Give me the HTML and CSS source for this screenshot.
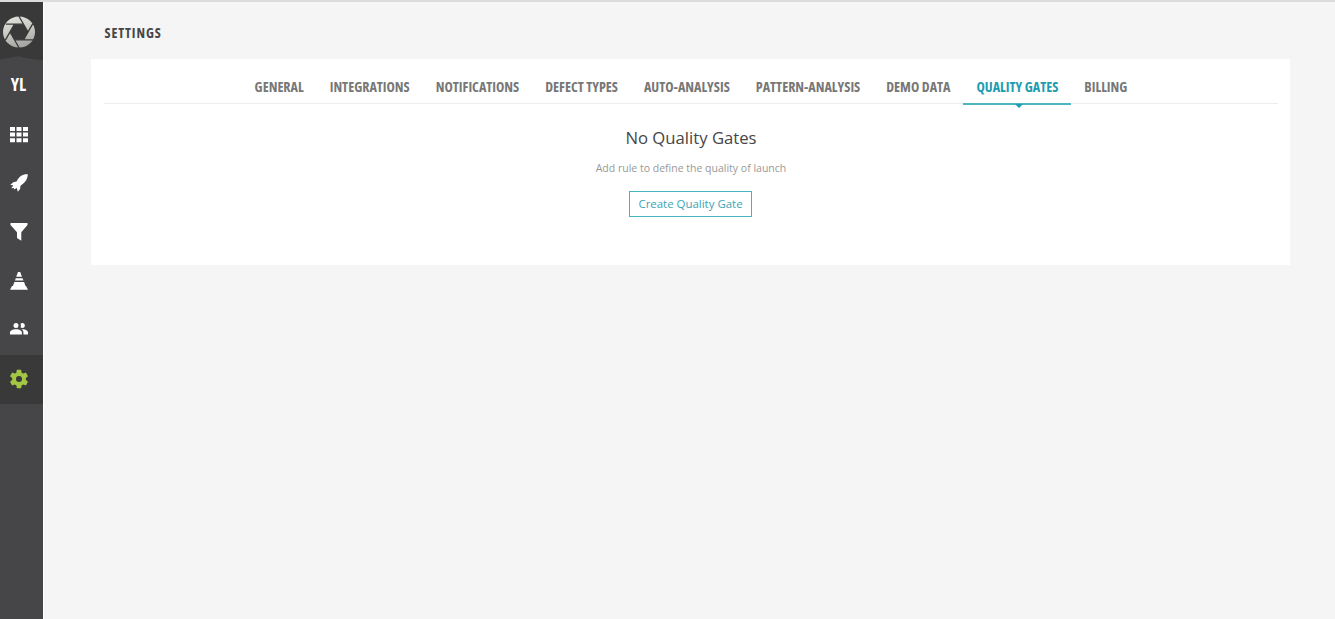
FILE: index.html
```html
<!DOCTYPE html>
<html lang="en">
<head>
<meta charset="utf-8">
<title>Settings</title>
<link rel="stylesheet" href="styles.css">
</head>
<body>
<div class="app">
  <aside class="sidebar">
    <div class="logo">
      <svg width="34" height="34" viewBox="0 0 34 34">
        <defs><linearGradient id="metal" x1="0" y1="0" x2="0.3" y2="1"><stop offset="0" stop-color="#e4e4e0"/><stop offset=".5" stop-color="#ccccc7"/><stop offset="1" stop-color="#a8a8a6"/></linearGradient></defs>
        <path fill="url(#metal)" fill-rule="evenodd" d="M17 1.4a16 15.6 0 1 0 0 31.2a16 15.6 0 1 0 0-31.2zM26 17L21.5 9.2H12.5L8 17L12.5 24.8H21.5z"/>
        <path fill="none" stroke="#393939" stroke-width="1.3" d="M21.5 9.2H4M26 17L16.8 1M21.5 24.8L30.8 8.7M12.5 24.8H31M8 17L17.2 33M12.5 9.2L3.2 25.3"/>
      </svg>
      <svg class="arch" width="43" height="5" viewBox="0 0 43 5"><path fill="#464547" d="M0 3.3Q10 2.5 18.5 0Q28 3 43 4V5H0z"/></svg>
    </div>
    <div class="item project">YL</div>
    <div class="item"><svg width="18" height="16" viewBox="0 0 18 16"><path fill="#fff" d="M0 0h5v4H0zM6.5 0h5v4h-5zM13 0h5v4h-5zM0 5.6h5v4H0zM6.5 5.6h5v4h-5zM13 5.6h5v4h-5zM0 11.2h5v4H0zM6.5 11.2h5v4h-5zM13 11.2h5v4h-5z"/></svg></div>
    <div class="item raised"><svg width="18" height="18" viewBox="0 0 18 18"><path fill="#fff" d="M17.8.2C12.6-.2 9.4 2.2 6.5 7.4L3.2 8.2L.2 11.1L3.4 11.2L1.3 14.2L4 13.9L3.9 15.6L6.8 14L7.8 17.8L10.1 15L10.5 11.7C15.3 8.4 17.6 5.2 17.8.2z"/></svg></div>
    <div class="item raised"><svg width="18" height="18" viewBox="0 0 18 18"><path fill="#fff" d="M.5 0h17v2L11.3 9.2v8.6L7 15V9.2L.5 2z"/></svg></div>
    <div class="item raised"><svg width="18" height="18" viewBox="0 0 18 18"><path fill="#fff" d="M8 0h2.2l1.8 4.8H6.2zM5.8 6.3h6.8l.8 2.2H5zM4.4 10h9.7l1.4 4.1h.5l2 3.7H0l2-3.7h.9z"/></svg></div>
    <div class="item members"><svg width="18" height="12" viewBox="0 0 18 12"><path fill="#fff" d="M6 0a2.5 2.5 0 1 1 0 5a2.5 2.5 0 1 1 0-5zM12.3 0a2.5 2.5 0 1 1 0 5a2.5 2.5 0 0 1-1.8-.8a4 4 0 0 0 0-3.5a2.5 2.5 0 0 1 1.8-.7zM6 6.2c3.5 0 5.9 1.4 5.9 3.2V11.6H0V9.4C0 7.6 2.5 6.2 6 6.2zM12.2 6.2c3.5 0 5.8 1.4 5.8 3.2v2.2h-4.6V9.2c0-1.2-.8-2.2-1.9-2.9z"/></svg></div>
    <div class="item active"><svg width="22" height="22" viewBox="0 0 24 24"><path fill="#a3c644" d="M19.43 12.98c.04-.32.07-.64.07-.98s-.03-.66-.07-.98l2.11-1.65c.19-.15.24-.42.12-.64l-2-3.46c-.12-.22-.39-.3-.61-.22l-2.49 1c-.52-.4-1.08-.73-1.69-.98l-.38-2.65C14.46 2.18 14.25 2 14 2h-4c-.25 0-.46.18-.49.42l-.38 2.65c-.61.25-1.17.59-1.69.98l-2.49-1c-.23-.09-.49 0-.61.22l-2 3.46c-.13.22-.07.49.12.64l2.11 1.65c-.04.32-.07.65-.07.98s.03.66.07.98l-2.11 1.65c-.19.15-.24.42-.12.64l2 3.46c.12.22.39.3.61.22l2.49-1c.52.4 1.08.73 1.69.98l.38 2.65c.03.24.24.42.49.42h4c.25 0 .46-.18.49-.42l.38-2.65c.61-.25 1.17-.59 1.69-.98l2.49 1c.23.09.49 0 .61-.22l2-3.46c.12-.22.07-.49-.12-.64zM12 15.3a3.3 3.3 0 1 1 0-6.6a3.3 3.3 0 1 1 0 6.6z"/></svg></div>
  </aside>
  <main class="content">
    <h1 class="title">SETTINGS</h1>
    <section class="panel">
      <nav class="tabs">
        <a class="tab">GENERAL</a>
        <a class="tab">INTEGRATIONS</a>
        <a class="tab">NOTIFICATIONS</a>
        <a class="tab">DEFECT TYPES</a>
        <a class="tab">AUTO-ANALYSIS</a>
        <a class="tab">PATTERN-ANALYSIS</a>
        <a class="tab">DEMO DATA</a>
        <a class="tab selected">QUALITY GATES</a>
        <a class="tab">BILLING</a>
      </nav>
      <div class="empty">
        <h2 class="heading">No Quality Gates</h2>
        <p class="hint">Add rule to define the quality of launch</p>
        <button class="create">Create Quality Gate</button>
      </div>
    </section>
  </main>
</div>
</body>
</html>
```
FILE: styles.css
```css
* { box-sizing: border-box; }
body { margin: 0; background: #f5f5f5; font-family: "Open Sans", sans-serif; }
.app { display: flex; height: 619px; border-top: 2px solid #dcdcdc; overflow: hidden; }
.sidebar { width: 43px; flex: none; background: #464547; }
.logo { height: 59px; background: #393939; padding: 13px 0 0 2px; position: relative; }
.logo svg { display: block; }
.logo .arch { position: absolute; left: 0; bottom: 0; }
.item { height: 49px; width: 43px; padding-right: 5px; display: flex; align-items: center; justify-content: center; }
.item svg { display: block; }
.project { color: #fff; font-size: 17.5px; font-weight: 700; font-stretch: 75%; padding-bottom: 3px; padding-right: 6px; }
.raised { padding-bottom: 2px; }
.members { padding-bottom: 4px; }
.active { background: #393939; padding-bottom: 1px; }
.content { flex: 1; padding: 0 45px 0 47px; border-left: 1px solid #fff; }
.title { margin: 0; padding: 21px 0 0 13.5px; height: 57px; font-size: 13.8px; line-height: 20px; font-weight: 680; font-stretch: 75%; letter-spacing: .9px; color: #464547; }
.panel { height: 206px; background: #fff; padding: 0 12px 0 13px; }
.tabs { height: 45px; display: flex; justify-content: center; border-bottom: 1px solid #eee; }
.tab { position: relative; height: 46px; padding: 18px 13px 0; font-size: 14.05px; line-height: 19px; font-weight: 680; font-stretch: 75%; color: #777; white-space: nowrap; }
.selected { color: #1c9cb0; border-bottom: 2px solid #4db6c4; }
.selected::after { content: ""; position: absolute; left: 52px; top: 45px; border: 4px solid transparent; border-top-color: #1c9cb0; border-bottom: 0; }
.empty { display: flex; flex-direction: column; align-items: center; }
.heading { margin: 21px 0 0; font-size: 16.7px; line-height: 26px; font-weight: 400; color: #464547; }
.hint { margin: 7px 0 0; font-size: 10.5px; line-height: 20px; color: #999; }
.create { margin: 13px 1px 0 0; width: 123px; height: 26px; padding: 0 0 2px; background: #fff; border: 1px solid #45b3c1; color: #3ba5b5; font: 11.45px "Open Sans", sans-serif; white-space: nowrap; }
```
